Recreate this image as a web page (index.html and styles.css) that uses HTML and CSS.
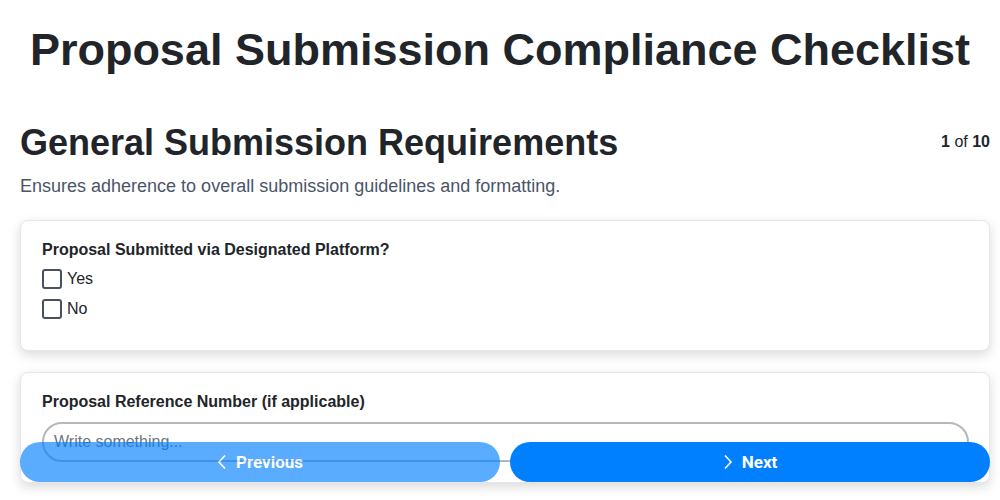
FILE: index.html
```html
<!DOCTYPE html>
<html lang="en">

<head>
    <meta charset="UTF-8">
    <meta name="viewport" content="width=device-width, initial-scale=1.0">
    <title>Proposal Submission Compliance Checklist</title>
    <link rel="stylesheet" href="styles.css">
</head>

<body>

    <h1 class="page-title">Proposal Submission Compliance Checklist</h1>

    <div class="section">
        <div class="section-header">
            <h2>General Submission Requirements</h2>
            <div class="step-count"><b>1</b> of <b>10</b></div>
        </div>
        <p class="section-desc">Ensures adherence to overall submission guidelines and formatting.</p>

        <!-- Question cards -->
        <div class="card">
            <div class="question">Proposal Submitted via Designated Platform?</div>
            <label class="option"><input type="checkbox"> Yes</label>
            <label class="option"><input type="checkbox"> No</label>
        </div>

        <div class="card">
            <div class="question">Proposal Reference Number (if applicable)</div>
            <input type="text" class="text-input" placeholder="Write something...">
        </div>
    </div>

    <!-- Navigation buttons -->
    <div class="nav-buttons">
        <button class="nav-btn disabled">
            <svg width="10" height="16" viewBox="0 0 10 16"><polyline points="8,1.5 2,8 8,14.5" /></svg>
            Previous
        </button>
        <button class="nav-btn">
            <svg width="10" height="16" viewBox="0 0 10 16"><polyline points="2,1.5 8,8 2,14.5" /></svg>
            Next
        </button>
    </div>

</body>

</html>
```

FILE: styles.css
```css
* {
    margin: 0;
    padding: 0;
    box-sizing: border-box;
}

body {
    font-family: "Liberation Sans", Arial, sans-serif;
    background-color: #fff;
    color: #212529;
    padding-top: 20px;
}

.page-title {
    font-size: 45px;
    font-weight: bold;
    text-align: center;
    line-height: 60px;
    margin-bottom: 41px;
}

.section {
    padding: 0 10px 20px 20px;
}

.section-header {
    display: flex;
    justify-content: space-between;
    align-items: flex-start;
}

.section-header h2 {
    font-size: 36px;
    line-height: 44px;
}

.step-count {
    font-size: 16px;
    padding-top: 12px;
}

.section-desc {
    font-size: 18px;
    color: #4a5568;
    margin-top: 11px;
    margin-bottom: 23px;
}

.card {
    background-color: #fff;
    border: 1px solid #e5e7eb;
    border-radius: 8px;
    box-shadow: 0 4px 12px rgba(0, 0, 0, 0.15);
    padding: 19px 20px 20px 21px;
    margin-bottom: 21px;
}

.question {
    font-size: 16px;
    font-weight: bold;
    line-height: 20px;
    margin-bottom: 8px;
}

.option {
    display: flex;
    align-items: center;
    gap: 5px;
    font-size: 16px;
    line-height: 22px;
    margin-bottom: 8px;
}

.option input {
    appearance: none;
    width: 20px;
    height: 20px;
    border: 2px solid #4b5060;
    border-radius: 3px;
    background: #fff;
}

.option:last-child {
    margin-bottom: 10px;
}

.text-input {
    width: 100%;
    height: 40px;
    margin-top: 2px;
    border: 2px solid #b3b8bf;
    border-radius: 20px;
    padding: 0 10px;
    font-family: "Liberation Sans", Arial, sans-serif;
    font-size: 16px;
    color: #212529;
}

.text-input::placeholder {
    color: #6c757d;
}

/* Fixed navigation at the bottom */
.nav-buttons {
    position: fixed;
    left: 20px;
    right: 10px;
    bottom: 18px;
    display: flex;
    gap: 10px;
}

.nav-btn {
    flex: 1;
    height: 40px;
    border: none;
    border-radius: 20px;
    background-color: #0080ff;
    color: #fff;
    font-family: Roboto, sans-serif;
    font-size: 17px;
    font-weight: bold;
    display: flex;
    align-items: center;
    justify-content: center;
    gap: 9px;
    padding-bottom: 1px;
    cursor: pointer;
}

.nav-btn svg {
    fill: none;
    stroke: #fff;
    stroke-width: 1.6;
}

.nav-btn.disabled {
    opacity: 0.65;
}
```
